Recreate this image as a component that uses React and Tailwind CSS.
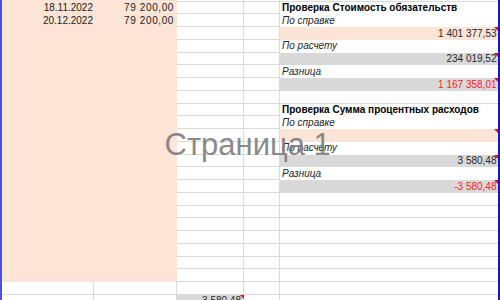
import React from "react";

const peach = "bg-[#fce4d6]";
const gray = "bg-[#d9d9d9]";
const line = "border-[#dadada]";

const leftData = {
  "-1": ["18.10.2022", "79 200,00"],
  0: ["18.11.2022", "79 200,00"],
  1: ["20.12.2022", "79 200,00"],
};

const rightData = {
  0: { text: "Проверка Стоимость обязательств", kind: "title" },
  1: { text: "По справке", kind: "label" },
  2: { text: "1 401 377,53", kind: "value", bg: peach },
  3: { text: "По расчету", kind: "label" },
  4: { text: "234 019,52", kind: "value", bg: gray },
  5: { text: "Разница", kind: "label" },
  6: { text: "1 167 358,01", kind: "value", bg: gray, red: true },
  8: { text: "Проверка Сумма процентных расходов", kind: "title" },
  9: { text: "По справке", kind: "label" },
  10: { text: "", kind: "value", bg: peach },
  11: { text: "По расчету", kind: "label" },
  12: { text: "3 580,48", kind: "value", bg: gray },
  13: { text: "Разница", kind: "label" },
  14: { text: "-3 580,48", kind: "value", bg: gray, red: true },
};

function Mark() {
  return (
    <span className="absolute right-0 top-0 h-0 w-0 border-l-[4px] border-t-[4px] border-l-transparent border-t-[#ff0000]" />
  );
}

function LeftCells({ r }) {
  if (r <= 21) {
    const d = leftData[r];
    return (
      <>
        <div className={`w-[92px] h-full ${peach} flex items-center justify-end pr-[1px] text-[#1a1a1a]`}>
          {d ? d[0] : ""}
        </div>
        <div className={`w-[83px] h-full ${peach} flex items-center justify-end pr-[3px] text-[#1a1a1a] tracking-[0.6px]`}>
          {d ? d[1] : ""}
        </div>
      </>
    );
  }
  return (
    <>
      <div className={`w-[92px] h-full bg-white border-r border-b ${line}`} />
      <div className={`w-[83px] h-full bg-white border-r border-b ${line}`} />
    </>
  );
}

function RightCell({ r }) {
  const d = rightData[r];
  if (!d) {
    return <div className={`w-[218px] h-full bg-white border-b ${line}`} />;
  }
  if (d.kind === "title") {
    return (
      <div className="w-[218px] h-full bg-white flex items-center pl-[2px] font-bold text-black">
        {d.text}
      </div>
    );
  }
  if (d.kind === "label") {
    return (
      <div className="w-[218px] h-full bg-white flex items-center pl-[2px] italic text-[#262626]">
        {d.text}
      </div>
    );
  }
  return (
    <div
      className={`relative w-[218px] h-full ${d.bg} flex items-center justify-end pr-[1.5px] ${
        d.red ? "text-[#ff2020]" : "text-[#262626]"
      }`}
    >
      {d.text}
      <Mark />
    </div>
  );
}

function Row({ r }) {
  const bottom = r === 23;
  return (
    <div className="flex h-[12.75px] leading-[11.75px]">
      <LeftCells r={r} />
      {bottom ? (
        <div className={`relative w-[67px] h-full ${gray} flex items-center justify-end pr-[3px] text-[#262626]`}>
          3 580,48
          <Mark />
        </div>
      ) : (
        <div className={`w-[67px] h-full bg-white border-r border-b ${line}`} />
      )}
      <div className={`w-[36px] h-full bg-white border-r border-b ${line}`} />
      <RightCell r={r} />
    </div>
  );
}

export default function App() {
  const rows = [];
  for (let r = -1; r <= 23; r++) rows.push(r);

  return (
    <div
      className="relative w-[500px] h-[300px] overflow-hidden bg-white text-[10px]"
      style={{ fontFamily: '"Liberation Sans", Arial, sans-serif' }}
    >
      <div className="flex h-full">
        <div className="w-[2px] h-full bg-[#4f4fe0]" />
        <div className="w-[496px] -mt-[11.05px]">
          {rows.map((r) => (
            <Row key={r} r={r} />
          ))}
        </div>
        <div className="w-[2px] h-full bg-[#1414c8]" />
      </div>
      <div className="absolute left-[164.5px] top-[128.8px] text-[31px] leading-none text-[#7a7a7a]/90 whitespace-nowrap">
        Страница 1
      </div>
    </div>
  );
}
